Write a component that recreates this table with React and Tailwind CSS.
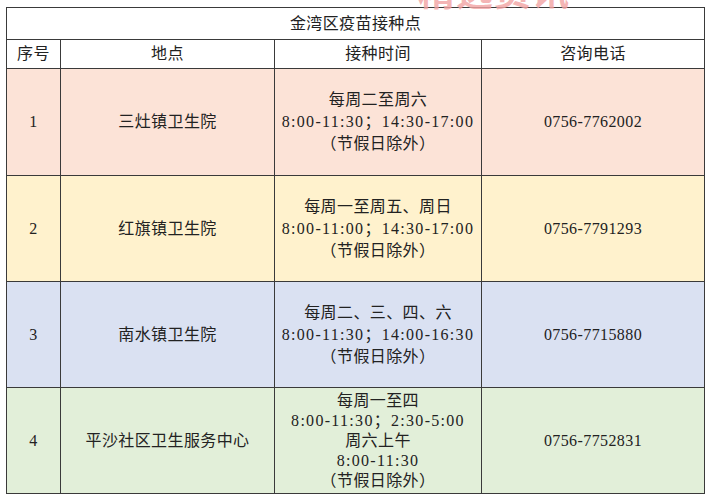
import React from 'react'

const rows = [
  { no: '1', place: '三灶镇卫生院', time: ['每周二至周六', '8:00-11:30；14:30-17:00', '（节假日除外）'], tel: '0756-7762002', bg: 'bg-[#fce3d7]', h: 'h-[107px]' },
  { no: '2', place: '红旗镇卫生院', time: ['每周一至周五、周日', '8:00-11:00；14:30-17:00', '（节假日除外）'], tel: '0756-7791293', bg: 'bg-[#fff2cd]', h: 'h-[106px]' },
  { no: '3', place: '南水镇卫生院', time: ['每周二、三、四、六', '8:00-11:30；14:00-16:30', '（节假日除外）'], tel: '0756-7715880', bg: 'bg-[#dae1f2]', h: 'h-[106px]' },
  { no: '4', place: '平沙社区卫生服务中心', time: ['每周一至四', '8:00-11:30；2:30-5:00', '周六上午', '8:00-11:30', '（节假日除外）'], tel: '0756-7752831', bg: 'bg-[#e2efd9]', h: 'h-[106px]', tight: true },
]

export default function App() {
  return (
    <div className="relative w-[710px] h-[500px] bg-white overflow-hidden text-[#222]" style={{ fontFamily: '"Liberation Serif", "Noto Sans CJK SC", serif' }}>
      <div className="absolute left-[418px] top-[-34px] text-[37px] font-bold text-[#f2a3a3] tracking-[1px] opacity-80">精选资讯</div>
      <div className="pt-[7px] pl-[6px]">
        <table className="border-collapse text-[16px] text-center tracking-[0.4px]">
          <colgroup>
            <col className="w-[54px]" />
            <col className="w-[214px]" />
            <col className="w-[207px]" />
            <col className="w-[223px]" />
          </colgroup>
          <tbody>
            <tr className="h-[32px]">
              <td colSpan={4} className="border border-[#3a3a3a] bg-white">金湾区疫苗接种点</td>
            </tr>
            <tr className="h-[29px]">
              <td className="border border-[#3a3a3a]">序号</td>
              <td className="border border-[#3a3a3a]">地点</td>
              <td className="border border-[#3a3a3a]">接种时间</td>
              <td className="border border-[#3a3a3a]">咨询电话</td>
            </tr>
            {rows.map((r) => (
              <tr key={r.no} className={`${r.bg} ${r.h}`}>
                <td className="border border-[#3a3a3a]">{r.no}</td>
                <td className="border border-[#3a3a3a]">{r.place}</td>
                <td className={`border border-[#3a3a3a] ${r.tight ? 'leading-[20px]' : 'leading-[22px]'}`}>
                  {r.time.map((t, i) => (
                    <div key={i} className={/\d/.test(t) ? 'tracking-[1.3px]' : ''}>{t}</div>
                  ))}
                </td>
                <td className="border border-[#3a3a3a]">{r.tel}</td>
              </tr>
            ))}
          </tbody>
        </table>
      </div>
    </div>
  )
}
